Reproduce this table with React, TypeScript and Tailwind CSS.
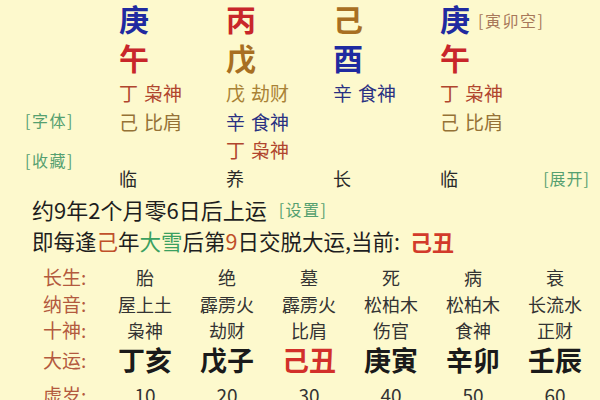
import React from "react";

type Hidden = { s: string; g: string; c: string };
type Pillar = {
  stem: string;
  stemC: string;
  branch: string;
  branchC: string;
  hidden: Hidden[];
  life: string;
  extra?: string;
};

const RED_H = "text-[#b0452e]";
const OLIVE_H = "text-[#957236]";
const OCHRE_H = "text-[#a98236]";
const NAVY_H = "text-[#2a3182]";

const pillars: Pillar[] = [
  {
    stem: "庚",
    stemC: "text-[#1f2aa0]",
    branch: "午",
    branchC: "text-[#c8262a]",
    hidden: [
      { s: "丁", g: "枭神", c: RED_H },
      { s: "己", g: "比肩", c: OLIVE_H },
    ],
    life: "临",
  },
  {
    stem: "丙",
    stemC: "text-[#c8262a]",
    branch: "戊",
    branchC: "text-[#a86f22]",
    hidden: [
      { s: "戊", g: "劫财", c: OCHRE_H },
      { s: "辛", g: "食神", c: NAVY_H },
      { s: "丁", g: "枭神", c: RED_H },
    ],
    life: "养",
  },
  {
    stem: "己",
    stemC: "text-[#a86f22]",
    branch: "酉",
    branchC: "text-[#1f2aa0]",
    hidden: [{ s: "辛", g: "食神", c: NAVY_H }],
    life: "长",
  },
  {
    stem: "庚",
    stemC: "text-[#1f2aa0]",
    branch: "午",
    branchC: "text-[#c8262a]",
    hidden: [
      { s: "丁", g: "枭神", c: RED_H },
      { s: "己", g: "比肩", c: OLIVE_H },
    ],
    life: "临",
    extra: "[寅卯空]",
  },
];

const table = [
  { label: "长生:", vals: ["胎", "绝", "墓", "死", "病", "衰"], h: "h-[26px]" },
  { label: "纳音:", vals: ["屋上土", "霹雳火", "霹雳火", "松柏木", "松柏木", "长流水"], h: "h-[27px]" },
  { label: "十神:", vals: ["枭神", "劫财", "比肩", "伤官", "食神", "正财"], h: "h-[26px]" },
];

const dayun = ["丁亥", "戊子", "己丑", "庚寅", "辛卯", "壬辰"];
const ages = ["10", "20", "30", "40", "50", "60"];

function PillarCol({ p }: { p: Pillar }) {
  const slots = [0, 1, 2].map((i) => p.hidden[i]);
  return (
    <div className="w-[107px] grid grid-rows-[36px_42px_29px_29px_28px_28px]">
      <div className="flex items-center gap-[8px] h-[36px]">
        <span className={`text-[30px] font-bold leading-[36px] ${p.stemC}`}>{p.stem}</span>
        {p.extra && (
          <span className="text-[16px] tracking-[1.5px] text-[#a7785a] leading-[20px] mt-[3px] whitespace-nowrap">
            {p.extra}
          </span>
        )}
      </div>
      <div className="flex items-center h-[42px]">
        <span className={`text-[30px] font-bold leading-[40px] ${p.branchC}`}>{p.branch}</span>
      </div>
      {slots.map((h, i) => (
        <div key={i} className="flex items-center gap-[6px] text-[19px] leading-[26px]">
          {h && (
            <>
              <span className={h.c}>{h.s}</span>
              <span className={h.c}>{h.g}</span>
            </>
          )}
        </div>
      ))}
      <div className="flex items-center text-[18px] text-[#2a2a2a] leading-[26px]">{p.life}</div>
    </div>
  );
}

export default function App() {
  return (
    <div className="w-[600px] h-[400px] overflow-hidden bg-[#fdf9cd] font-['Noto_Sans_CJK_SC','Noto_Sans',sans-serif] text-[#1e1e1e]">
      {/* pillars */}
      <div className="flex h-[192px]">
        <div className="w-[119px] shrink-0 flex flex-col pl-[25px]">
          <div className="mt-[106px] h-[28px] flex items-center text-[16px] tracking-[1.5px] text-[#55a070]">
            [字体]
          </div>
          <div className="mt-[12px] h-[28px] flex items-center text-[16px] tracking-[1.5px] text-[#55a070]">
            [收藏]
          </div>
        </div>
        {pillars.map((p, i) => (
          <PillarCol key={i} p={p} />
        ))}
        <div className="flex-1 min-w-0 flex flex-col justify-end">
          <div className="h-[28px] flex items-center justify-end pr-[10px] text-[16px] tracking-[1px] text-[#55a070] whitespace-nowrap">
            [展开]
          </div>
        </div>
      </div>

      {/* lines */}
      <div className="pl-[32px]">
        <div className="h-[34px] flex items-center text-[22px] leading-[30px]">
          <span>约9年2个月零6日后上运</span>
          <span className="ml-[12px] text-[16px] tracking-[1.5px] text-[#55a070]">[设置]</span>
        </div>
        <div className="h-[30px] flex items-center text-[21.5px] leading-[30px]">
          <span>即每逢</span>
          <span className="text-[#c0502a]">己</span>
          <span>年</span>
          <span className="text-[#3aa060]">大雪</span>
          <span>后第</span>
          <span className="text-[#c0502a]">9</span>
          <span>日交脱大运,当前:</span>
          <span className="ml-[10px] text-[22px] font-bold text-[#d23a2a]">己丑</span>
        </div>
      </div>

      {/* table */}
      <div className="pt-[8px]">
        {table.map((r) => (
          <div key={r.label} className={`grid grid-cols-[104px_repeat(6,82px)] items-center ${r.h}`}>
            <div className="pl-[43px] text-[19px] text-[#b35a3e] leading-[24px]">{r.label}</div>
            {r.vals.map((v, i) => (
              <div key={i} className="text-center text-[18px] text-[#333333] leading-[24px]">
                {v}
              </div>
            ))}
          </div>
        ))}
        <div className="grid grid-cols-[104px_repeat(6,82px)] items-center h-[34px]">
          <div className="pl-[43px] text-[19px] text-[#b35a3e] leading-[26px]">大运:</div>
          {dayun.map((v, i) => (
            <div
              key={i}
              className={`text-center text-[27px] font-bold leading-[32px] ${
                v === "己丑" ? "text-[#d2302a]" : "text-[#1a1a1a]"
              }`}
            >
              {v}
            </div>
          ))}
        </div>
        <div className="grid grid-cols-[104px_repeat(6,82px)] items-center h-[36px]">
          <div className="pl-[43px] text-[19px] text-[#b35a3e] leading-[26px]">虚岁:</div>
          {ages.map((v, i) => (
            <div key={i} className="text-center text-[19px] text-[#333333] leading-[26px]">
              {v}
            </div>
          ))}
        </div>
      </div>
    </div>
  );
}
